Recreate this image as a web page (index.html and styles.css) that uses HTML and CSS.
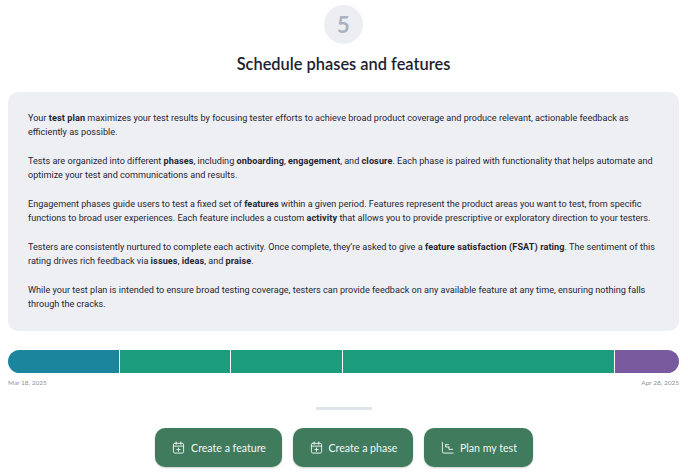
FILE: index.html
```html
<!DOCTYPE html>
<html lang="en">
<head>
<meta charset="utf-8">
<title>Schedule phases and features</title>
<link rel="stylesheet" href="styles.css">
</head>
<body>
<main class="page">
  <div class="step">5</div>
  <h1 class="title">Schedule phases and features</h1>
  <section class="card">
    <p>Your <b>test plan</b> maximizes your test results by focusing tester efforts to achieve broad product coverage and produce relevant, actionable feedback as efficiently as possible.</p>
    <p>Tests are organized into different <b>phases</b>, including <b>onboarding</b>, <b>engagement</b>, and <b>closure</b>. Each phase is paired with functionality that helps automate and optimize your test and communications and results.</p>
    <p>Engagement phases guide users to test a fixed set of <b>features</b> within a given period. Features represent the product areas you want to test, from specific functions to broad user experiences. Each feature includes a custom <b>activity</b> that allows you to provide prescriptive or exploratory direction to your testers.</p>
    <p>Testers are consistently nurtured to complete each activity. Once complete, they’re asked to give a <b>feature satisfaction (FSAT) rating</b>. The sentiment of this rating drives rich feedback via <b>issues</b>, <b>ideas</b>, and <b>praise</b>.</p>
    <p>While your test plan is intended to ensure broad testing coverage, testers can provide feedback on any available feature at any time, ensuring nothing falls through the cracks.</p>
  </section>
  <div class="timeline">
    <div class="seg seg-a"></div>
    <div class="seg seg-b"></div>
    <div class="seg seg-b"></div>
    <div class="seg seg-c"></div>
    <div class="seg seg-d"></div>
  </div>
  <div class="dates"><span>Mar 18, 2025</span><span>Apr 28, 2025</span></div>
  <div class="divider"></div>
  <div class="actions">
    <button class="btn btn-feature">
      <svg class="icon" viewBox="0 0 14 14" fill="none" stroke="currentColor" stroke-width="1" stroke-linecap="round" stroke-linejoin="round"><rect x="1.500" y="2.500" width="11" height="10.500" rx="1.500"/><path d="M1.500 5.500h11M4.500 1v2.500M9.500 1v2.500M7 7.500v3.500M5.250 9.250h3.500"/></svg>
      Create a feature
    </button>
    <button class="btn btn-phase">
      <svg class="icon" viewBox="0 0 14 14" fill="none" stroke="currentColor" stroke-width="1" stroke-linecap="round" stroke-linejoin="round"><rect x="1.500" y="2.500" width="11" height="10.500" rx="1.500"/><path d="M1.500 5.500h11M4.500 1v2.500M9.500 1v2.500M7 7.500v3.500M5.250 9.250h3.500"/></svg>
      Create a phase
    </button>
    <button class="btn btn-plan">
      <svg class="icon" viewBox="0 0 14 14" fill="none" stroke="currentColor" stroke-width="1" stroke-linecap="round" stroke-linejoin="round"><path d="M1.500 1.500v10a1.500 1.500 0 0 0 1.500 1.500h10M5 4h3M5 4v2.500h3.500M8.500 6.500v2.500h4"/></svg>
      Plan my test
    </button>
  </div>
</main>
</body>
</html>
```
FILE: styles.css
```css
* { box-sizing: border-box; }
html, body { margin: 0; padding: 0; background: #fff; }
body { font-family: "Lato", "Liberation Sans", sans-serif; color: #1b2230; overflow: hidden; }
.page { width: 688px; height: 473px; padding: 5px 9px 0 8px; display: flex; flex-direction: column; align-items: stretch; }
.step { align-self: center; width: 39px; height: 39px; border-radius: 50%; background: #eceef2; color: #aab1bf; font-size: 22px; font-weight: 700; display: flex; align-items: center; justify-content: center; }
.title { margin: 10px 0 0; height: 20px; line-height: 20px; font-size: 16.400px; font-weight: 600; text-align: center; color: #1b2230; }
.card { margin-top: 18px; height: 239px; padding: 19px 20px 0; border-radius: 10px; background: #eeeff3; font-family: "Roboto", "Liberation Sans", sans-serif; font-size: 9.100px; line-height: 14.330px; color: #1f2633; }
.card p { margin: 0 0 14.330px; }
.card b { font-weight: 700; letter-spacing: .1px; }
.timeline { margin-top: 19px; height: 23px; display: flex; gap: 1px; border-radius: 12px; overflow: hidden; }
.seg { height: 100%; }
.seg-a { width: 110.500px; background: #1a859d; }
.seg-b { width: 110.500px; background: #1b9c7c; }
.seg-c { width: 271px; background: #1b9c7c; }
.seg-d { flex: 1; background: #7a5a9f; }
.dates { margin-top: 5px; display: flex; justify-content: space-between; font-size: 6.500px; line-height: 9px; color: #8b919c; }
.divider { align-self: center; margin-top: 20px; width: 56px; height: 3px; background: #dfe3ea; }
.actions { margin-top: 18px; display: flex; justify-content: center; gap: 11px; }
.btn { height: 39px; padding: 0 0 0 2px; border: 0; border-radius: 10px; background: #3f7b5c; color: #f4f7f5; font-family: inherit; font-size: 10.600px; font-weight: 400; display: flex; align-items: center; justify-content: center; gap: 6px; box-shadow: 0 1px 2px rgba(0,0,0,.2); }
.btn-feature { width: 127px; }
.btn-phase { width: 120px; }
.btn-plan { width: 109px; }
.icon { width: 13px; height: 13px; flex: none; }
```
